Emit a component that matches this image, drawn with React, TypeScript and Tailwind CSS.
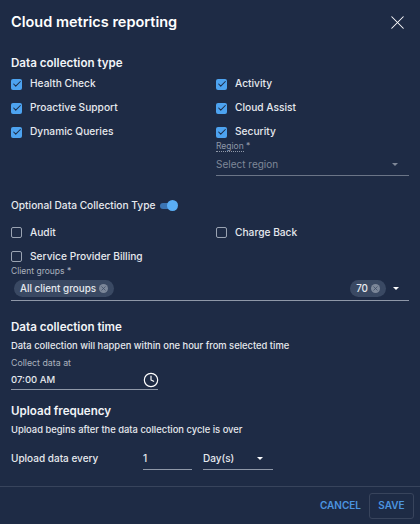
import { Check, Clock, X } from "lucide-react";
import type { ReactNode } from "react";

const font = { fontFamily: "Inter, sans-serif" };

function Box({ label, checked }: { label: string; checked?: boolean }) {
  return (
    <div className="flex h-[24px] items-center gap-[8px]">
      {checked ? (
        <span className="flex h-[11px] w-[11px] items-center justify-center rounded-[2px] bg-[#4da3f0]">
          <Check size={10} strokeWidth={2.5} className="text-[#1e2b45]" />
        </span>
      ) : (
        <span className="h-[11px] w-[11px] rounded-[2px] border border-[#9aa3b2]" />
      )}
      <span className="text-[10.2px] font-medium text-[#e6e9ee]">{label}</span>
    </div>
  );
}

function Caret() {
  return <span className="h-0 w-0 border-x-[3.5px] border-t-[3.5px] border-x-transparent border-t-white" />;
}

function Chip({ children }: { children: ReactNode }) {
  return (
    <span className="flex h-[17px] items-center gap-[3px] rounded-full bg-[#3a4963] px-[6px] text-[9.9px] font-medium text-[#e6e9ee]">
      {children}
      <span className="flex h-[9px] w-[9px] items-center justify-center rounded-full bg-[#7c8799]">
        <X size={7} strokeWidth={2.5} className="text-[#3a4963]" />
      </span>
    </span>
  );
}

function Heading({ children }: { children: ReactNode }) {
  return <h3 className="text-[11.6px] font-semibold leading-[16px] text-[#f2f4f7]">{children}</h3>;
}

export default function App() {
  return (
    <div style={font} className="flex h-[524px] w-[420px] flex-col overflow-hidden bg-[#1e2b45]">
      <div className="flex h-[44px] items-center justify-between pl-[11px] pr-[11px]">
        <h2 className="text-[14.5px] font-semibold text-white">Cloud metrics reporting</h2>
        <X size={23} strokeWidth={1.1} className="text-white" />
      </div>

      <div className="flex-1 px-[11px] pt-[11px]">
        <Heading>Data collection type</Heading>
        <div className="mt-[1px] grid grid-cols-[205px_1fr]">
          <div>
            <Box checked label="Health Check" />
            <Box checked label="Proactive Support" />
            <Box checked label="Dynamic Queries" />
          </div>
          <div>
            <Box checked label="Activity" />
            <Box checked label="Cloud Assist" />
            <Box checked label="Security" />
            <div className="-mt-[3px] text-[8.5px] leading-[10px] text-[#8f98a8]">
              <span className="border-b border-dotted border-[#8f98a8]">Region</span> *
            </div>
            <div className="flex h-[25px] items-center justify-between border-b border-[#6b7587] pr-[11px] pt-[2px] text-[10px] text-[#7f8898]">
              Select region
              <span className="h-0 w-0 border-x-[3.5px] border-t-[3.5px] border-x-transparent border-t-[#7f8898]" />
            </div>
          </div>
        </div>

        <div className="mt-[22px] flex items-center gap-[5px] text-[10.2px] font-medium text-[#e6e9ee]">
          Optional Data Collection Type
          <span className="relative h-[6px] w-[16px] rounded-full bg-[#3b74b3]">
            <span className="absolute right-[-2px] top-[-2.5px] h-[11px] w-[11px] rounded-full bg-[#5aaef5]" />
          </span>
        </div>
        <div className="mt-[7px] grid grid-cols-[205px_1fr]">
          <Box label="Audit" />
          <Box label="Charge Back" />
          <Box label="Service Provider Billing" />
        </div>

        <div className="-mt-[2px] text-[8.5px] leading-[10px] text-[#aab1bd]">Client groups *</div>
        <div className="flex h-[25px] items-center justify-between border-b border-[#8f98a8] pl-[3px] pr-[10px]">
          <Chip>All client groups</Chip>
          <div className="flex items-center gap-[7px]">
            <Chip>70</Chip>
            <Caret />
          </div>
        </div>

        <div className="mt-[18px]">
          <Heading>Data collection time</Heading>
        </div>
        <p className="mt-[5px] text-[9.4px] font-medium leading-[12px] text-[#e6e9ee]">
          Data collection will happen within one hour from selected time
        </p>
        <div className="mt-[6px] text-[8.8px] leading-[10px] text-[#aab1bd]">Collect data at</div>
        <div className="flex h-[22px] w-[147px] items-center justify-between border-b border-[#8f98a8] pt-[3px] text-[9.5px] font-medium text-[#e6e9ee]">
          07:00 AM
          <Clock size={16} strokeWidth={1.75} className="text-white -mr-[1px]" />
        </div>

        <div className="mt-[13px]">
          <Heading>Upload frequency</Heading>
        </div>
        <p className="mt-[5px] text-[9.4px] font-medium leading-[12px] text-[#e6e9ee]">
          Upload begins after the data collection cycle is over
        </p>
        <div className="mt-[11px] flex items-center text-[10px] font-medium text-[#e6e9ee]">
          <span className="w-[132px]">Upload data every</span>
          <span className="flex h-[22px] w-[49px] items-center border-b border-[#8f98a8]">1</span>
          <span className="ml-[11px] flex h-[23px] w-[70px] items-center justify-between border-b border-[#8f98a8] pr-[10px]">
            Day(s)
            <Caret />
          </span>
        </div>
      </div>

      <div className="flex h-[38px] items-center justify-end gap-[8px] border-t border-[#38445c] pr-[6px]">
        <span className="text-[10px] font-semibold text-[#4b94e0]">CANCEL</span>
        <span className="flex h-[26px] w-[45px] items-center justify-center rounded-[3px] border border-[#38445c] text-[10px] font-semibold text-[#4b94e0]">
          SAVE
        </span>
      </div>
    </div>
  );
}
